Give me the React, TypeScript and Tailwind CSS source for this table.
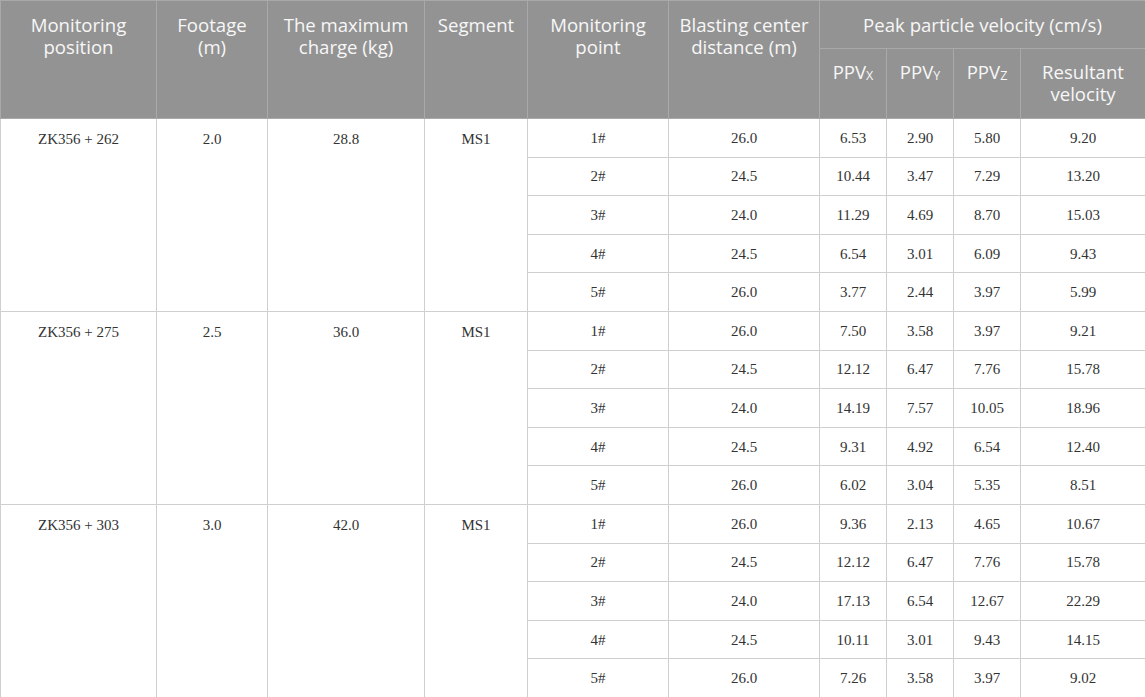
const groups = [
  {
    pos: "ZK356 + 262",
    footage: "2.0",
    charge: "28.8",
    seg: "MS1",
    rows: [
      ["1#", "26.0", "6.53", "2.90", "5.80", "9.20"],
      ["2#", "24.5", "10.44", "3.47", "7.29", "13.20"],
      ["3#", "24.0", "11.29", "4.69", "8.70", "15.03"],
      ["4#", "24.5", "6.54", "3.01", "6.09", "9.43"],
      ["5#", "26.0", "3.77", "2.44", "3.97", "5.99"],
    ],
  },
  {
    pos: "ZK356 + 275",
    footage: "2.5",
    charge: "36.0",
    seg: "MS1",
    rows: [
      ["1#", "26.0", "7.50", "3.58", "3.97", "9.21"],
      ["2#", "24.5", "12.12", "6.47", "7.76", "15.78"],
      ["3#", "24.0", "14.19", "7.57", "10.05", "18.96"],
      ["4#", "24.5", "9.31", "4.92", "6.54", "12.40"],
      ["5#", "26.0", "6.02", "3.04", "5.35", "8.51"],
    ],
  },
  {
    pos: "ZK356 + 303",
    footage: "3.0",
    charge: "42.0",
    seg: "MS1",
    rows: [
      ["1#", "26.0", "9.36", "2.13", "4.65", "10.67"],
      ["2#", "24.5", "12.12", "6.47", "7.76", "15.78"],
      ["3#", "24.0", "17.13", "6.54", "12.67", "22.29"],
      ["4#", "24.5", "10.11", "3.01", "9.43", "14.15"],
      ["5#", "26.0", "7.26", "3.58", "3.97", "9.02"],
    ],
  },
];

const th =
  "border border-[#a9a9a9] align-top text-center font-normal pt-[13px] px-2 leading-[22px]";
const thSub =
  "border border-[#a9a9a9] align-top text-center font-normal pt-[12px] px-2 leading-[22px]";
const thMid =
  "border border-[#a9a9a9] align-middle text-center font-normal p-0 leading-[22px]";
const td = "border border-[#cfcfcf] text-center align-middle h-[38.6px] p-0";
const tdTop = "border border-[#cfcfcf] text-center align-top pt-[10px] p-0";

function Sub({ base, s }: { base: string; s: string }) {
  return (
    <span>
      {base}
      <sub className="text-[12.5px] relative top-[1px]">{s}</sub>
    </span>
  );
}

export default function App() {
  return (
    <div className="w-[1145px] h-[697px] bg-white overflow-hidden">
      <table
        className="w-[1145px] table-fixed border-collapse text-[#333]"
        style={{ fontFamily: '"Liberation Serif", serif' }}
      >
        <colgroup>
          <col className="w-[156px]" />
          <col className="w-[111px]" />
          <col className="w-[157px]" />
          <col className="w-[103px]" />
          <col className="w-[141px]" />
          <col className="w-[151px]" />
          <col className="w-[67px]" />
          <col className="w-[67px]" />
          <col className="w-[67px]" />
          <col className="w-[125px]" />
        </colgroup>
        <thead
          className="bg-[#939393] text-[#f7f7f7] text-[18.6px]"
          style={{ fontFamily: '"Open Sans", sans-serif' }}
        >
          <tr className="h-[48px]">
            <th rowSpan={2} className={th}>
              Monitoring position
            </th>
            <th rowSpan={2} className={th}>
              Footage (m)
            </th>
            <th rowSpan={2} className={th}>
              The maximum charge (kg)
            </th>
            <th rowSpan={2} className={th}>
              Segment
            </th>
            <th rowSpan={2} className={th}>
              Monitoring point
            </th>
            <th rowSpan={2} className={th + " px-1"}>
              Blasting center distance (m)
            </th>
            <th colSpan={4} className={thMid}>
              Peak particle velocity (cm/s)
            </th>
          </tr>
          <tr className="h-[70px]">
            <th className={thSub + " px-0"}>
              <Sub base="PPV" s="X" />
            </th>
            <th className={thSub + " px-0"}>
              <Sub base="PPV" s="Y" />
            </th>
            <th className={thSub + " px-0"}>
              <Sub base="PPV" s="Z" />
            </th>
            <th className={thSub}>Resultant velocity</th>
          </tr>
        </thead>
        <tbody className="text-[15px] leading-[20px]">
          {groups.map((g) =>
            g.rows.map((r, i) => (
              <tr key={g.pos + i}>
                {i === 0 && (
                  <>
                    <td rowSpan={5} className={tdTop}>
                      {g.pos}
                    </td>
                    <td rowSpan={5} className={tdTop}>
                      {g.footage}
                    </td>
                    <td rowSpan={5} className={tdTop}>
                      {g.charge}
                    </td>
                    <td rowSpan={5} className={tdTop}>
                      {g.seg}
                    </td>
                  </>
                )}
                {r.map((v, j) => (
                  <td key={j} className={td}>
                    {v}
                  </td>
                ))}
              </tr>
            ))
          )}
        </tbody>
      </table>
    </div>
  );
}
